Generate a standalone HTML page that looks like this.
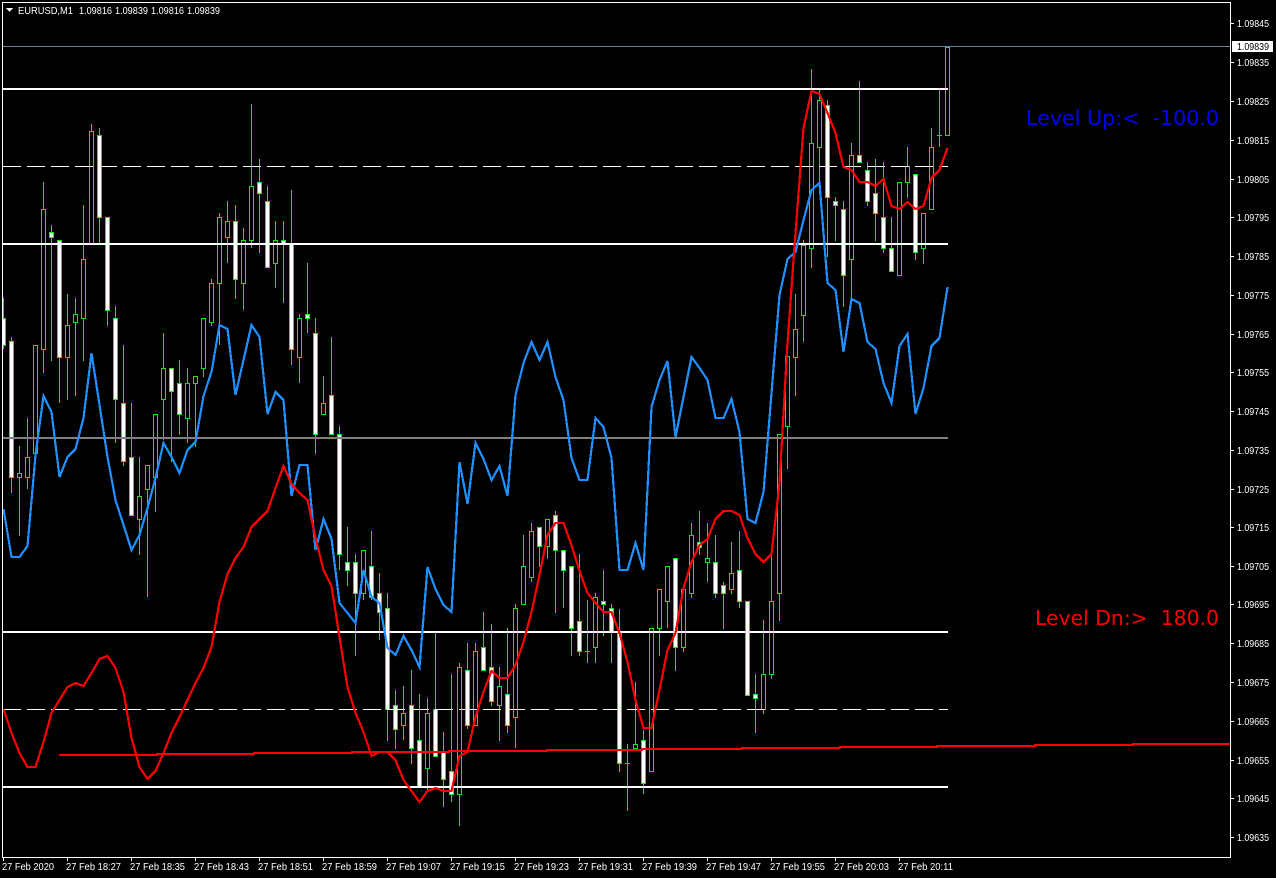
<!DOCTYPE html>
<html>
<head>
<meta charset="utf-8">
<title>EURUSD,M1</title>
<style>
html,body{margin:0;padding:0;background:#000;width:1276px;height:878px;overflow:hidden}
svg{display:block}
text{font-family:"Liberation Sans",Arial,sans-serif;font-size:10.5px;fill:#fff}
.big{font-family:"DejaVu Sans",sans-serif;font-size:20.5px}
</style>
</head>
<body>
<svg width="1276" height="878" viewBox="0 0 1276 878" xmlns="http://www.w3.org/2000/svg">
<rect width="1276" height="878" fill="#000"/>
<g shape-rendering="crispEdges">
<!-- wicks -->
<path fill="none" stroke="#1ee61e" stroke-width="1" d="M3.5 298V349M11.5 337V493M19.5 446V536M27.5 418V489M35.5 345V453M43.5 182V373M51.5 225V361M59.5 240V403M67.5 294V400M75.5 298V396M83.5 205V361M91.5 124V244M99.5 128V243M107.5 217V326M115.5 306V443M123.5 345V466M131.5 403V515M139.5 457V555M147.5 465V597M155.5 414V512M163.5 333V440M171.5 368V462M179.5 360V435M187.5 368V443M195.5 376V447M203.5 318V377M211.5 279V326M219.5 213V345M227.5 201V263M235.5 205V299M243.5 228V310M251.5 104V248M259.5 159V253M267.5 186V267M275.5 221V288M283.5 221V303M291.5 190V365M299.5 314V383M307.5 263V333M315.5 318V454M323.5 376V414M331.5 337V434M339.5 426V570M347.5 527V586M355.5 554V656M363.5 550V600M371.5 531V600M379.5 573V640M387.5 593V741M395.5 690V749M403.5 686V740M411.5 670V764M419.5 694V787M427.5 698V790M435.5 633V756M443.5 732V807M451.5 674V802M459.5 663V826M467.5 643V729M475.5 643V725M483.5 612V670M491.5 624V706M499.5 667V741M507.5 628V733M515.5 604V748M523.5 535V604M531.5 523V582M539.5 527V567M547.5 519V559M555.5 511V613M563.5 550V608M571.5 566V656M579.5 554V656M587.5 600V663M595.5 593V663M603.5 570V636M611.5 604V663M619.5 609V772M627.5 744V811M635.5 682V748M643.5 730V794M651.5 628V771M659.5 589V656M667.5 566V628M675.5 558V671M683.5 589V652M691.5 523V598M699.5 511V555M707.5 523V582M715.5 535V598M723.5 582V629M731.5 542V594M739.5 531V608M747.5 601V695M755.5 674V733M763.5 620V714M771.5 556V679M779.5 434V621M787.5 333V469M795.5 294V396M803.5 240V342M811.5 69V268M819.5 88V182M827.5 100V257M835.5 197V241M843.5 201V307M851.5 143V298M859.5 81V162M867.5 162V206M875.5 159V241M883.5 162V253M891.5 217V271M899.5 182V275M907.5 147V198M915.5 174V260M923.5 213V264M931.5 128V209M939.5 90V147M947.5 47V135M585 651.5h5M625 763.5h5M937 135.5h5"/>
<!-- hollow (bull) bodies -->
<path fill="#000" stroke="#0cf00c" stroke-width="1" d="M17.5 473.5h4V477.5h-4zM25.5 457.5h4V477.5h-4zM33.5 345.5h4V453.5h-4zM41.5 209.5h4V349.5h-4zM65.5 325.5h4V357.5h-4zM73.5 314.5h4V322.5h-4zM81.5 259.5h4V318.5h-4zM89.5 131.5h4V244.5h-4zM137.5 496.5h4V519.5h-4zM145.5 465.5h4V489.5h-4zM153.5 414.5h4V477.5h-4zM161.5 368.5h4V399.5h-4zM185.5 383.5h4V418.5h-4zM193.5 376.5h4V383.5h-4zM201.5 318.5h4V368.5h-4zM209.5 283.5h4V322.5h-4zM217.5 217.5h4V283.5h-4zM225.5 221.5h4V237.5h-4zM241.5 240.5h4V283.5h-4zM249.5 186.5h4V240.5h-4zM273.5 240.5h4V263.5h-4zM297.5 318.5h4V357.5h-4zM321.5 403.5h4V414.5h-4zM361.5 550.5h4V593.5h-4zM401.5 713.5h4V725.5h-4zM425.5 713.5h4V768.5h-4zM457.5 667.5h4V794.5h-4zM473.5 651.5h4V725.5h-4zM497.5 686.5h4V705.5h-4zM513.5 608.5h4V717.5h-4zM521.5 566.5h4V604.5h-4zM529.5 531.5h4V577.5h-4zM545.5 519.5h4V546.5h-4zM593.5 597.5h4V647.5h-4zM633.5 744.5h4V748.5h-4zM649.5 628.5h4V771.5h-4zM657.5 589.5h4V628.5h-4zM665.5 566.5h4V601.5h-4zM681.5 589.5h4V647.5h-4zM689.5 535.5h4V593.5h-4zM705.5 558.5h4V562.5h-4zM729.5 573.5h4V589.5h-4zM761.5 674.5h4V709.5h-4zM769.5 601.5h4V674.5h-4zM777.5 434.5h4V593.5h-4zM785.5 356.5h4V426.5h-4zM793.5 329.5h4V357.5h-4zM801.5 245.5h4V315.5h-4zM809.5 143.5h4V248.5h-4zM817.5 100.5h4V147.5h-4zM849.5 155.5h4V259.5h-4zM897.5 182.5h4V275.5h-4zM905.5 166.5h4V182.5h-4zM921.5 213.5h4V248.5h-4zM929.5 147.5h4V209.5h-4zM945.5 47.5h4V135.5h-4z"/>
<!-- filled (bear) bodies -->
<path fill="#fff" stroke="#0cf00c" stroke-width="1" d="M1.5 318.5h4V345.5h-4zM9.5 341.5h4V477.5h-4zM49.5 232.5h4V237.5h-4zM57.5 240.5h4V357.5h-4zM97.5 135.5h4V217.5h-4zM105.5 217.5h4V310.5h-4zM113.5 318.5h4V399.5h-4zM121.5 403.5h4V461.5h-4zM129.5 457.5h4V515.5h-4zM169.5 368.5h4V391.5h-4zM177.5 383.5h4V414.5h-4zM233.5 221.5h4V279.5h-4zM257.5 182.5h4V193.5h-4zM265.5 201.5h4V267.5h-4zM281.5 240.5h4V243.5h-4zM289.5 244.5h4V349.5h-4zM305.5 314.5h4V318.5h-4zM313.5 333.5h4V434.5h-4zM329.5 395.5h4V434.5h-4zM337.5 434.5h4V554.5h-4zM345.5 562.5h4V570.5h-4zM353.5 562.5h4V593.5h-4zM369.5 566.5h4V597.5h-4zM377.5 593.5h4V612.5h-4zM385.5 608.5h4V709.5h-4zM393.5 705.5h4V729.5h-4zM409.5 705.5h4V748.5h-4zM417.5 740.5h4V787.5h-4zM433.5 709.5h4V756.5h-4zM441.5 752.5h4V779.5h-4zM449.5 771.5h4V794.5h-4zM465.5 670.5h4V725.5h-4zM481.5 647.5h4V670.5h-4zM489.5 667.5h4V701.5h-4zM505.5 694.5h4V725.5h-4zM537.5 527.5h4V546.5h-4zM553.5 515.5h4V550.5h-4zM561.5 550.5h4V570.5h-4zM569.5 566.5h4V628.5h-4zM577.5 621.5h4V651.5h-4zM601.5 601.5h4V604.5h-4zM609.5 608.5h4V632.5h-4zM617.5 633.5h4V763.5h-4zM641.5 740.5h4V783.5h-4zM673.5 558.5h4V647.5h-4zM697.5 542.5h4V547.5h-4zM713.5 562.5h4V593.5h-4zM721.5 585.5h4V593.5h-4zM737.5 570.5h4V601.5h-4zM745.5 601.5h4V695.5h-4zM753.5 694.5h4V698.5h-4zM825.5 105.5h4V197.5h-4zM833.5 201.5h4V205.5h-4zM841.5 209.5h4V275.5h-4zM857.5 155.5h4V162.5h-4zM865.5 170.5h4V201.5h-4zM873.5 193.5h4V213.5h-4zM881.5 217.5h4V248.5h-4zM889.5 248.5h4V271.5h-4zM913.5 174.5h4V252.5h-4z"/>

<!-- horizontal levels -->
<rect x="3" y="46" width="1228" height="1" fill="#708090"/>
<rect x="3" y="88" width="945" height="2" fill="#fff"/>
<rect x="3" y="243" width="945" height="2" fill="#fff"/>
<rect x="3" y="631" width="945" height="2" fill="#fff"/>
<rect x="3" y="786" width="945" height="2" fill="#fff"/>
<rect x="3" y="437" width="945" height="2" fill="#808080"/>
<path d="M3 166.5H948M3 709.5H948" stroke="#fff" stroke-width="1" stroke-dasharray="18 6" fill="none"/>

<!-- blue -->
<polyline fill="none" stroke="#1e90ff" stroke-width="2.2" points="3.5,509 11.5,557 19.5,557 27.5,546 35.5,455 43.5,396 51.5,412 59.5,477 67.5,457 75.5,449 83.5,418 91.5,353 99.5,405 107.5,457 115.5,500 123.5,525 131.5,550 139.5,535 147.5,508 155.5,478 163.5,443 171.5,457 179.5,473 187.5,450 195.5,442 203.5,396 211.5,372 219.5,325 227.5,329 235.5,395 243.5,360 251.5,325 259.5,337 267.5,414 275.5,392 283.5,400 291.5,496 299.5,465 307.5,465 315.5,550 323.5,519 331.5,539 339.5,603 347.5,613 355.5,623 363.5,570 371.5,597 379.5,603 387.5,648 395.5,655 403.5,636 411.5,650 419.5,667 427.5,567 435.5,589 443.5,605 451.5,612 459.5,462 467.5,504 475.5,443 483.5,459 491.5,480 499.5,466 507.5,496 515.5,395 523.5,363 531.5,342 539.5,360 547.5,342 555.5,377 563.5,400 571.5,458 579.5,480 587.5,480 595.5,418 603.5,427 611.5,458 619.5,570 627.5,570 635.5,543 643.5,570 651.5,407 659.5,380 667.5,361 675.5,437 683.5,397 691.5,357 699.5,368 707.5,380 715.5,418 723.5,418 731.5,399 739.5,432 747.5,519 755.5,523 763.5,492 771.5,393 779.5,295 787.5,259 795.5,252 803.5,220 811.5,190 819.5,183 827.5,283 835.5,290 843.5,352 851.5,299 859.5,303 867.5,342 875.5,349 883.5,383 891.5,403 899.5,346 907.5,334 915.5,414 923.5,388 931.5,346 939.5,338 947.5,287"/>
<!-- red -->
<polyline fill="none" stroke="#ff0000" stroke-width="2.2" points="3.5,709 11.5,733 19.5,753 27.5,767 35.5,767 43.5,742 51.5,713 59.5,700 67.5,687 75.5,683 83.5,686 91.5,673 99.5,659 107.5,656 115.5,668 123.5,692 131.5,738 139.5,767 147.5,779 155.5,771 163.5,753 171.5,733 179.5,717 187.5,700 195.5,683 203.5,668 211.5,647 219.5,602 227.5,574 235.5,558 243.5,547 251.5,527 259.5,519 267.5,511 275.5,488 283.5,466 291.5,484 299.5,493 307.5,500 315.5,538 323.5,570 331.5,586 339.5,637 347.5,687 355.5,713 363.5,732 371.5,756 379.5,752 387.5,752 395.5,760 403.5,780 411.5,791 419.5,802 427.5,791 435.5,788 443.5,791 451.5,791 459.5,756 467.5,752 475.5,717 483.5,692 491.5,671 499.5,678 507.5,678 515.5,665 523.5,642 531.5,612 539.5,575 547.5,535 555.5,523 563.5,523 571.5,545 579.5,571 587.5,593 595.5,603 603.5,612 611.5,612 619.5,633 627.5,662 635.5,700 643.5,728 651.5,728 659.5,690 667.5,650 675.5,633 683.5,588 691.5,562 699.5,545 707.5,539 715.5,519 723.5,511 731.5,511 739.5,515 747.5,538 755.5,554 763.5,562 771.5,554 779.5,483 787.5,343 795.5,233 803.5,128 811.5,91 819.5,94 827.5,113 835.5,133 843.5,167 851.5,170 859.5,182 867.5,182 875.5,186 883.5,179 891.5,206 899.5,209 907.5,202 915.5,209 923.5,206 931.5,178 939.5,170 947.5,148"/>
<!-- long red MA -->
<path fill="none" stroke="#ff0000" stroke-width="2" d="M59 755H157V754H254V753H352V752H449V751H547V750H642V749H742V748H840V747H937V746H1035V745H1133V744H1230"/>

<!-- frame -->
<rect x="0" y="0" width="2" height="878" fill="#000"/>
<rect x="2" y="2" width="1229" height="1" fill="#fff"/>
<rect x="2" y="2" width="1" height="856" fill="#fff"/>
<rect x="1230" y="2" width="1" height="856" fill="#fff"/>
<rect x="2" y="857" width="1229" height="1" fill="#fff"/>

<!-- axis ticks -->
<path stroke="#fff" stroke-width="1" fill="none" d="M1231 23.5h3M1231 62.5h3M1231 101.5h3M1231 140.5h3M1231 179.5h3M1231 217.5h3M1231 256.5h3M1231 295.5h3M1231 334.5h3M1231 372.5h3M1231 411.5h3M1231 450.5h3M1231 489.5h3M1231 527.5h3M1231 566.5h3M1231 604.5h3M1231 643.5h3M1231 682.5h3M1231 721.5h3M1231 760.5h3M1231 798.5h3M1231 837.5h3M3.5 858v3M67.5 858v3M131.5 858v3M195.5 858v3M259.5 858v3M323.5 858v3M387.5 858v3M451.5 858v3M515.5 858v3M579.5 858v3M643.5 858v3M707.5 858v3M771.5 858v3M835.5 858v3M899.5 858v3"/>

<!-- header triangle -->
<polygon points="6,8 13,8 9.5,12" fill="#fff"/>
<rect x="1232" y="41" width="41" height="11" fill="#fff"/>
</g>

<!-- header -->
<text x="18" y="14" textLength="55" lengthAdjust="spacingAndGlyphs">EURUSD,M1</text>
<text x="79" y="14" textLength="33" lengthAdjust="spacingAndGlyphs">1.09816</text>
<text x="115" y="14" textLength="33" lengthAdjust="spacingAndGlyphs">1.09839</text>
<text x="151" y="14" textLength="33" lengthAdjust="spacingAndGlyphs">1.09816</text>
<text x="187" y="14" textLength="33" lengthAdjust="spacingAndGlyphs">1.09839</text>

<!-- price axis -->
<g>
<text x="1237" y="27" textLength="32" lengthAdjust="spacingAndGlyphs">1.09845</text>
<text x="1237" y="66" textLength="32" lengthAdjust="spacingAndGlyphs">1.09835</text>
<text x="1237" y="105" textLength="32" lengthAdjust="spacingAndGlyphs">1.09825</text>
<text x="1237" y="144" textLength="32" lengthAdjust="spacingAndGlyphs">1.09815</text>
<text x="1237" y="183" textLength="32" lengthAdjust="spacingAndGlyphs">1.09805</text>
<text x="1237" y="221" textLength="32" lengthAdjust="spacingAndGlyphs">1.09795</text>
<text x="1237" y="260" textLength="32" lengthAdjust="spacingAndGlyphs">1.09785</text>
<text x="1237" y="299" textLength="32" lengthAdjust="spacingAndGlyphs">1.09775</text>
<text x="1237" y="338" textLength="32" lengthAdjust="spacingAndGlyphs">1.09765</text>
<text x="1237" y="376" textLength="32" lengthAdjust="spacingAndGlyphs">1.09755</text>
<text x="1237" y="415" textLength="32" lengthAdjust="spacingAndGlyphs">1.09745</text>
<text x="1237" y="454" textLength="32" lengthAdjust="spacingAndGlyphs">1.09735</text>
<text x="1237" y="493" textLength="32" lengthAdjust="spacingAndGlyphs">1.09725</text>
<text x="1237" y="531" textLength="32" lengthAdjust="spacingAndGlyphs">1.09715</text>
<text x="1237" y="570" textLength="32" lengthAdjust="spacingAndGlyphs">1.09705</text>
<text x="1237" y="608" textLength="32" lengthAdjust="spacingAndGlyphs">1.09695</text>
<text x="1237" y="647" textLength="32" lengthAdjust="spacingAndGlyphs">1.09685</text>
<text x="1237" y="686" textLength="32" lengthAdjust="spacingAndGlyphs">1.09675</text>
<text x="1237" y="725" textLength="32" lengthAdjust="spacingAndGlyphs">1.09665</text>
<text x="1237" y="764" textLength="32" lengthAdjust="spacingAndGlyphs">1.09655</text>
<text x="1237" y="802" textLength="32" lengthAdjust="spacingAndGlyphs">1.09645</text>
<text x="1237" y="841" textLength="32" lengthAdjust="spacingAndGlyphs">1.09635</text>
<text x="1237" y="50" textLength="32" lengthAdjust="spacingAndGlyphs" style="fill:#000">1.09839</text>
</g>

<!-- time axis -->
<g>
<text x="2" y="870" textLength="52" lengthAdjust="spacingAndGlyphs">27 Feb 2020</text>
<text x="66" y="870" textLength="55" lengthAdjust="spacingAndGlyphs">27 Feb 18:27</text>
<text x="130" y="870" textLength="55" lengthAdjust="spacingAndGlyphs">27 Feb 18:35</text>
<text x="194" y="870" textLength="55" lengthAdjust="spacingAndGlyphs">27 Feb 18:43</text>
<text x="258" y="870" textLength="55" lengthAdjust="spacingAndGlyphs">27 Feb 18:51</text>
<text x="322" y="870" textLength="55" lengthAdjust="spacingAndGlyphs">27 Feb 18:59</text>
<text x="386" y="870" textLength="55" lengthAdjust="spacingAndGlyphs">27 Feb 19:07</text>
<text x="450" y="870" textLength="55" lengthAdjust="spacingAndGlyphs">27 Feb 19:15</text>
<text x="514" y="870" textLength="55" lengthAdjust="spacingAndGlyphs">27 Feb 19:23</text>
<text x="578" y="870" textLength="55" lengthAdjust="spacingAndGlyphs">27 Feb 19:31</text>
<text x="642" y="870" textLength="55" lengthAdjust="spacingAndGlyphs">27 Feb 19:39</text>
<text x="706" y="870" textLength="55" lengthAdjust="spacingAndGlyphs">27 Feb 19:47</text>
<text x="770" y="870" textLength="55" lengthAdjust="spacingAndGlyphs">27 Feb 19:55</text>
<text x="834" y="870" textLength="55" lengthAdjust="spacingAndGlyphs">27 Feb 20:03</text>
<text x="898" y="870" textLength="55" lengthAdjust="spacingAndGlyphs">27 Feb 20:11</text>
</g>

<!-- level labels -->
<text class="big" x="1026" y="125" textLength="193" lengthAdjust="spacingAndGlyphs" xml:space="preserve" style="fill:#0000ff;white-space:pre">Level Up:&lt;  -100.0</text>
<text class="big" x="1035" y="625" textLength="184" lengthAdjust="spacingAndGlyphs" xml:space="preserve" style="fill:#ff0000;white-space:pre">Level Dn:&gt;  180.0</text>
</svg>
</body>
</html>
